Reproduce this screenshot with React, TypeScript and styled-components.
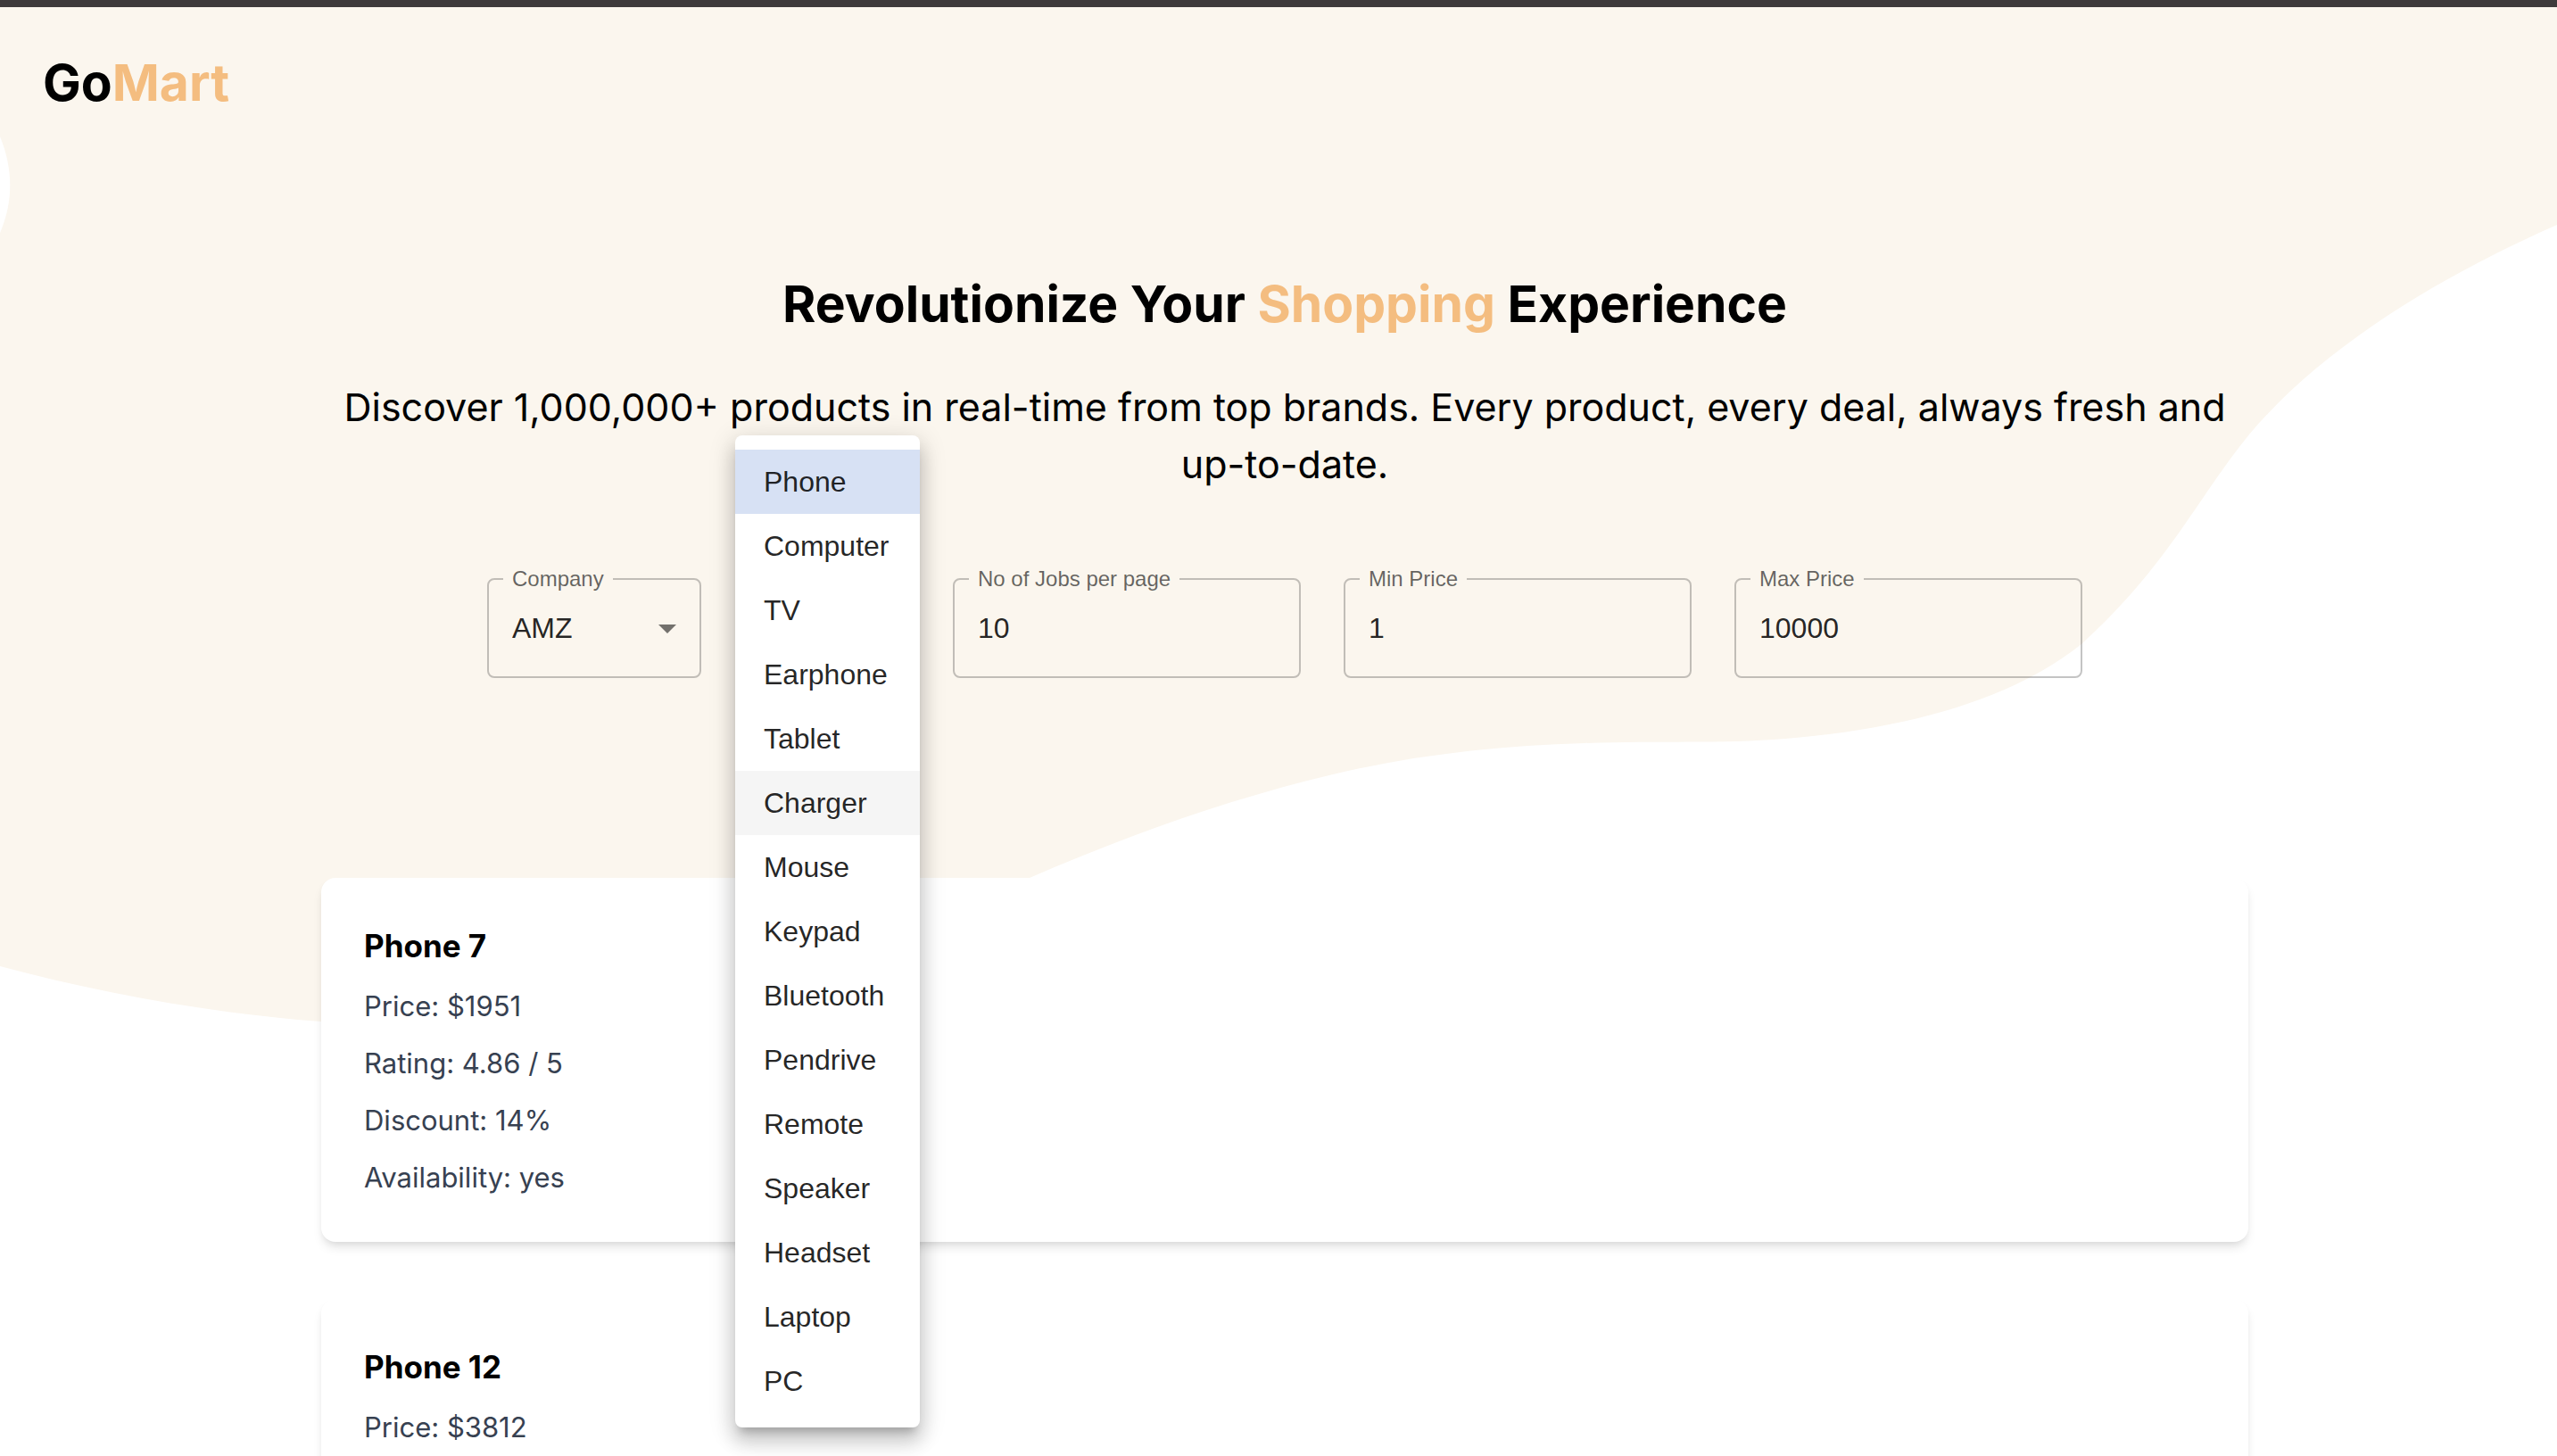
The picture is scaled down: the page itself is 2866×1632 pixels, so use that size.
import React, { useState } from "react";
import styled, { createGlobalStyle } from "styled-components";

const GlobalStyle = createGlobalStyle`
  *, *::before, *::after { box-sizing: border-box; }
  html { scrollbar-width: none; }
  body {
    margin: 0;
    background: #ffffff;
    color: #000000;
    font-family: Inter, "Liberation Sans", sans-serif;
  }
`;

const controlFont = `"Liberation Sans", Arial, sans-serif`;

const Page = styled.div`
  position: relative;
  height: 100vh;
  overflow: hidden;
  border-top: 8px solid #3e3a3b;
`;

const Content = styled.div`
  position: relative;
  margin-right: -14px;
`;

const Blob = styled.svg`
  position: absolute;
  top: 0;
  left: 0;
  width: 100%;
  height: 1152px;
`;

const Header = styled.header`
  padding: 48px;
`;

const Logo = styled.a`
  display: inline-block;
  font-size: 57px;
  line-height: 74px;
  font-weight: 700;
  color: inherit;
  text-decoration: none;
  vertical-align: top;
`;

const Accent = styled.span`
  color: #f4bd80;
`;

const Main = styled.main`
  width: 75%;
  margin: 0 auto;
  padding: 126px 0 64px;
`;

const Title = styled.h1`
  margin: 0 0 46px;
  font-size: 57px;
  line-height: 74px;
  font-weight: 700;
  text-align: center;
`;

const Lead = styled.p`
  margin: 0;
  font-size: 43px;
  line-height: 64px;
  text-align: center;
`;

const Filters = styled.form`
  display: flex;
  justify-content: center;
  gap: 48px;
  margin: 84px 0 224px;
  font-family: ${controlFont};
`;

const FieldSlot = styled.div<{ $width: number }>`
  position: relative;
  width: ${(p) => p.$width}px;
`;

const Outline = styled.fieldset`
  min-width: 0;
  margin: 0;
  padding: 0 16px 12px;
  border: 2px solid rgba(0, 0, 0, 0.23);
  border-radius: 8px;
`;

const Legend = styled.legend`
  padding: 0 10px;
  font-size: 24px;
  line-height: 26px;
  color: rgba(0, 0, 0, 0.6);
  white-space: nowrap;
`;

const controlStyles = `
  display: block;
  width: 100%;
  height: 84px;
  margin: 0;
  padding: 0 10px;
  border: 0;
  outline: 0;
  background: transparent;
  color: rgba(0, 0, 0, 0.87);
  font-family: ${controlFont};
  font-size: 32px;
  appearance: none;
`;

const TextInput = styled.input`
  ${controlStyles}
`;

const Select = styled.select`
  ${controlStyles}
`;

const Caret = styled.svg`
  position: absolute;
  right: 28px;
  bottom: 50px;
  width: 20px;
  height: 10px;
  fill: rgba(0, 0, 0, 0.54);
  pointer-events: none;
`;

const Menu = styled.ul`
  position: absolute;
  z-index: 2;
  top: -148px;
  left: -10px;
  min-width: 207px;
  margin: 0;
  padding: 16px 0;
  list-style: none;
  border-radius: 8px;
  background: #ffffff;
  box-shadow:
    0 10px 10px -6px rgba(0, 0, 0, 0.2),
    0 16px 20px 2px rgba(0, 0, 0, 0.14),
    0 6px 28px 4px rgba(0, 0, 0, 0.12);
`;

const MenuItem = styled.li<{ $selected: boolean; $hovered: boolean }>`
  padding: 12px 32px;
  font-size: 32px;
  line-height: 48px;
  white-space: nowrap;
  color: rgba(0, 0, 0, 0.87);
  cursor: pointer;
  background: ${(p) => (p.$selected ? "#d7e1f4" : p.$hovered ? "#f5f5f5" : "transparent")};
`;

const Results = styled.section`
  display: grid;
  gap: 64px;
`;

const Card = styled.article`
  padding: 48px;
  border-radius: 16px;
  background: #ffffff;
  box-shadow:
    0 8px 12px -2px rgba(0, 0, 0, 0.1),
    0 4px 8px -4px rgba(0, 0, 0, 0.1);
`;

const CardTitle = styled.h2`
  margin: 0;
  font-size: 35px;
  line-height: 56px;
  font-weight: 700;
`;

const CardLine = styled.p`
  margin: 16px 0 0;
  font-size: 31px;
  line-height: 48px;
  color: #374151;
`;

const categories = [
  "Phone", "Computer", "TV", "Earphone", "Tablet", "Charger", "Mouse", "Keypad",
  "Bluetooth", "Pendrive", "Remote", "Speaker", "Headset", "Laptop", "PC",
];

const companies = ["AMZ", "FLP", "SNP", "MYN", "AZO"];

const products = [
  { name: "Phone 7", price: 1951, rating: 4.86, discount: 14, availability: "yes" },
  { name: "Phone 12", price: 3812, rating: 4.77, discount: 36, availability: "yes" },
];

type FieldProps = { id: string; label: string; width: number; children: React.ReactNode; overlay?: React.ReactNode };

function Field({ id, label, width, children, overlay }: FieldProps) {
  return (
    <FieldSlot $width={width}>
      <Outline>
        <Legend><label htmlFor={id}>{label}</label></Legend>
        {children}
      </Outline>
      {overlay}
    </FieldSlot>
  );
}

function DownArrow() {
  return (
    <Caret viewBox="0 0 20 10" aria-hidden="true">
      <path d="M0 0l10 10L20 0z" />
    </Caret>
  );
}

function Background() {
  return (
    <Blob viewBox="0 8 2866 1152" preserveAspectRatio="none" aria-hidden="true">
      <path
        fill="#fbf6ee"
        d="M0 0H2866V252C2744 306 2608 384 2521 487C2463 558 2430 634 2333 722C2262 779 2150 816 2001 828C1926 834 1860 830 1776 833C1680 836 1585 846 1494 868C1376 896 1262 937 1154 984C900 1100 620 1160 360 1145C240 1136 115 1114 0 1083Z"
      />
      <path fill="#ffffff" d="M0 153C15 190 15 226 0 261Z" />
    </Blob>
  );
}

export default function App() {
  const [company, setCompany] = useState("AMZ");
  const [category, setCategory] = useState("Phone");
  const [hovered, setHovered] = useState("Charger");

  return (
    <Page>
      <GlobalStyle />
      <Background />
      <Content>
        <Header>
          <Logo href="#">Go<Accent>Mart</Accent></Logo>
        </Header>
        <Main>
          <Title>Revolutionize Your <Accent>Shopping</Accent> Experience</Title>
          <Lead>
            Discover 1,000,000+ products in real-time from top brands. Every product, every deal,
            always fresh and up-to-date.
          </Lead>
          <Filters>
            <Field id="company" label="Company" width={240} overlay={<DownArrow />}>
              <Select id="company" value={company} onChange={(e) => setCompany(e.target.value)}>
                {companies.map((c) => <option key={c}>{c}</option>)}
              </Select>
            </Field>
            <Field
              id="category"
              label="Category"
              width={186}
              overlay={
                <Menu role="listbox" aria-label="Category">
                  {categories.map((c) => (
                    <MenuItem
                      key={c}
                      role="option"
                      aria-selected={c === category}
                      $selected={c === category}
                      $hovered={c === hovered}
                      onMouseEnter={() => setHovered(c)}
                      onClick={() => setCategory(c)}
                    >
                      {c}
                    </MenuItem>
                  ))}
                </Menu>
              }
            >
              <Select id="category" value={category} onChange={(e) => setCategory(e.target.value)}>
                {categories.map((c) => <option key={c}>{c}</option>)}
              </Select>
            </Field>
            <Field id="count" label="No of Jobs per page" width={390}>
              <TextInput id="count" defaultValue="10" />
            </Field>
            <Field id="min" label="Min Price" width={390}>
              <TextInput id="min" defaultValue="1" />
            </Field>
            <Field id="max" label="Max Price" width={390}>
              <TextInput id="max" defaultValue="10000" />
            </Field>
          </Filters>
          <Results>
            {products.map((p) => (
              <Card key={p.name}>
                <CardTitle>{p.name}</CardTitle>
                <CardLine>Price: ${p.price}</CardLine>
                <CardLine>Rating: {p.rating} / 5</CardLine>
                <CardLine>Discount: {p.discount}%</CardLine>
                <CardLine>Availability: {p.availability}</CardLine>
              </Card>
            ))}
          </Results>
        </Main>
      </Content>
    </Page>
  );
}
